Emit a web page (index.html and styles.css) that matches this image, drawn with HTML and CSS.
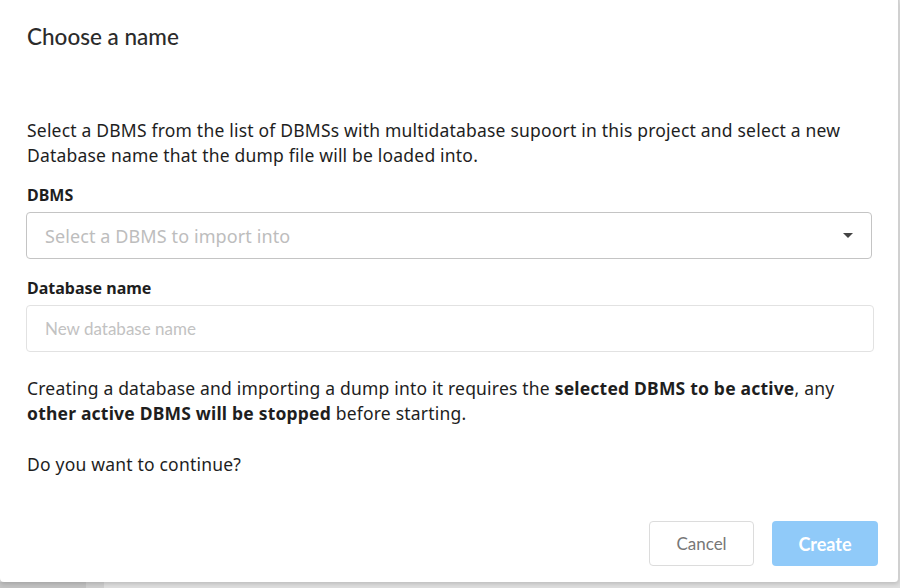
FILE: index.html
```html
<!DOCTYPE html>
<html lang="en">
<head>
    <meta charset="UTF-8">
    <title>Choose a name</title>
    <link rel="stylesheet" href="styles.css">
</head>
<body>
    <div class="dialog">
        <h2 class="dialog-title">Choose a name</h2>
        <div class="dialog-body">
            <p class="intro">Select a DBMS from the list of DBMSs with multidatabase supoort in this project and select a new Database name that the dump file will be loaded into.</p>

            <label class="field-label">DBMS</label>
            <div class="select-box">
                <span class="select-placeholder">Select a DBMS to import into</span>
                <span class="caret"></span>
            </div>

            <label class="field-label">Database name</label>
            <input class="text-input" type="text" placeholder="New database name">

            <p class="note">Creating a database and importing a dump into it requires the <b>selected DBMS to be active</b>, any <b>other active DBMS will be stopped</b> before starting.</p>
            <p class="question">Do you want to continue?</p>
        </div>
        <div class="dialog-actions">
            <button class="btn btn-cancel">Cancel</button>
            <button class="btn btn-create">Create</button>
        </div>
    </div>
    <div class="backdrop-strip">
        <div class="strip-dark"></div>
        <div class="strip-mid"></div>
    </div>
</body>
</html>
```

FILE: styles.css
```css
html, body {
    margin: 0;
    padding: 0;
}
body {
    width: 900px;
    height: 588px;
    overflow: hidden;
    background: #dedede;
    font-family: "Noto Sans", "Open Sans", sans-serif;
    color: #1e1e1e;
}
.dialog {
    width: 898px;
    height: 582px;
    background: #fff;
    border-right: 1px solid #d0d0d0;
    border-radius: 0 0 4px 4px;
    box-shadow: 0 2px 4px rgba(0, 0, 0, 0.15);
    display: flex;
    flex-direction: column;
    position: relative;
    z-index: 1;
}
.dialog-title {
    font-family: Lato, sans-serif;
    font-weight: 500;
    font-size: 22.5px;
    color: #2b2b2b;
    margin: 0;
    padding: 24px 27px 0;
    line-height: 26px;
}
.dialog-body {
    padding: 68px 26px 0 27px;
}
.intro, .note, .question {
    font-size: 17.5px;
    line-height: 25px;
    margin: 0;
    letter-spacing: 0.2px;
}
.intro {
    margin-bottom: 17px;
}
.field-label {
    display: block;
    font-size: 16px;
    font-weight: 700;
    line-height: 20px;
    margin-bottom: 7px;
}
.select-box {
    box-sizing: border-box;
    height: 47px;
    margin-left: -1px;
    border: 1px solid #c4c4c4;
    border-radius: 4px;
    display: flex;
    align-items: center;
    justify-content: space-between;
    padding: 0 18px 0 18px;
    margin-bottom: 19px;
}
.select-placeholder {
    font-size: 18px;
    color: #bdbdbd;
    letter-spacing: 0.1px;
}
.caret {
    width: 0;
    height: 0;
    border-left: 5px solid transparent;
    border-right: 5px solid transparent;
    border-top: 5px solid #444;
}
.text-input {
    display: block;
    box-sizing: border-box;
    width: 848px;
    height: 47px;
    margin-left: -1px;
    border: 1px solid #e2e2e2;
    border-radius: 4px;
    padding: 0 18px;
    font-family: Lato, sans-serif;
    font-size: 17px;
    outline: none;
    margin-bottom: 24px;
}
.text-input::placeholder {
    color: #c2c2c2;
}
.note {
    margin-bottom: 26px;
}
.dialog-actions {
    margin-top: auto;
    display: flex;
    justify-content: flex-end;
    gap: 18px;
    padding: 0 20px 16px 0;
}
.btn {
    font-family: Lato, sans-serif;
    height: 45px;
    border-radius: 4px;
    font-size: 17px;
    cursor: pointer;
}
.btn-cancel {
    width: 105px;
    background: #fff;
    border: 1px solid #dcdcdc;
    color: #777;
}
.btn-create {
    width: 106px;
    background: #90caf9;
    border: none;
    color: #fff;
    font-weight: 700;
    font-size: 18px;
}
.backdrop-strip {
    display: flex;
    height: 6px;
}
.strip-dark {
    width: 86px;
    background: #c2c2c2;
}
.strip-mid {
    width: 18px;
    background: #cfcfcf;
}
```
